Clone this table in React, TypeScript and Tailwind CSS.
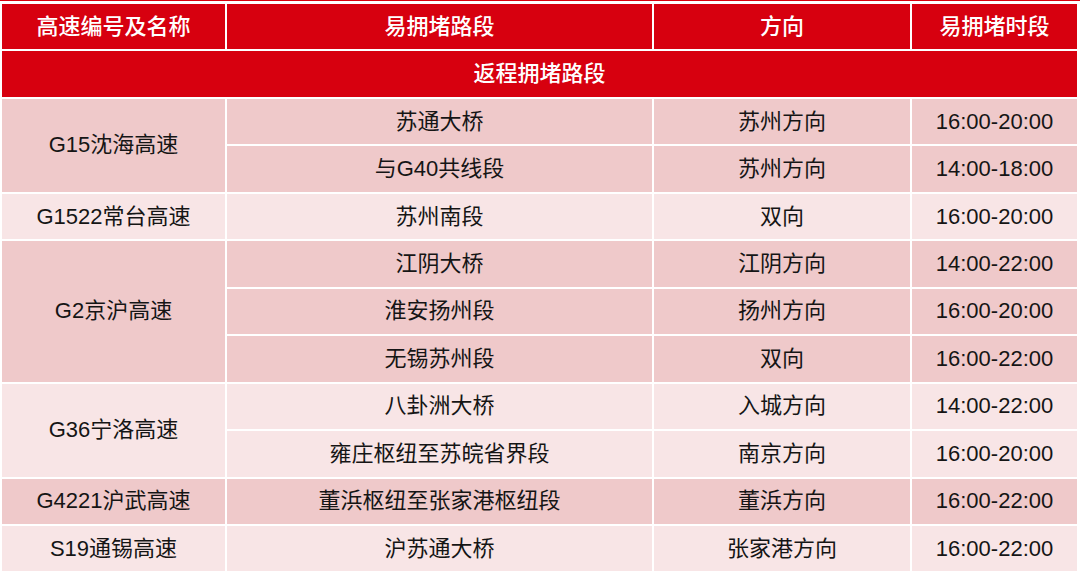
import React from "react";

const dark = "bg-[#efc9ca]";
const light = "bg-[#f8e5e6]";

type Row = { road: string; dir: string; time: string };
type Group = { name: string; rows: Row[]; tone: string };

const groups: Group[] = [
  {
    name: "G15沈海高速",
    tone: dark,
    rows: [
      { road: "苏通大桥", dir: "苏州方向", time: "16:00-20:00" },
      { road: "与G40共线段", dir: "苏州方向", time: "14:00-18:00" },
    ],
  },
  {
    name: "G1522常台高速",
    tone: light,
    rows: [{ road: "苏州南段", dir: "双向", time: "16:00-20:00" }],
  },
  {
    name: "G2京沪高速",
    tone: dark,
    rows: [
      { road: "江阴大桥", dir: "江阴方向", time: "14:00-22:00" },
      { road: "淮安扬州段", dir: "扬州方向", time: "16:00-20:00" },
      { road: "无锡苏州段", dir: "双向", time: "16:00-22:00" },
    ],
  },
  {
    name: "G36宁洛高速",
    tone: light,
    rows: [
      { road: "八卦洲大桥", dir: "入城方向", time: "14:00-22:00" },
      { road: "雍庄枢纽至苏皖省界段", dir: "南京方向", time: "16:00-20:00" },
    ],
  },
  {
    name: "G4221沪武高速",
    tone: dark,
    rows: [{ road: "董浜枢纽至张家港枢纽段", dir: "董浜方向", time: "16:00-22:00" }],
  },
  {
    name: "S19通锡高速",
    tone: light,
    rows: [{ road: "沪苏通大桥", dir: "张家港方向", time: "16:00-22:00" }],
  },
];

export default function App() {
  const cells: React.ReactNode[] = [];
  let rowIdx = 3;
  groups.forEach((g, gi) => {
    const span = g.rows.length;
    cells.push(
      <div
        key={`g${gi}`}
        className={`${g.tone} flex items-center justify-center`}
        style={{ gridColumn: "1", gridRow: `${rowIdx} / span ${span}` }}
      >
        {g.name}
      </div>
    );
    g.rows.forEach((r, ri) => {
      const row = rowIdx + ri;
      cells.push(
        <div key={`r${gi}-${ri}-a`} className={`${g.tone} flex items-center justify-center`} style={{ gridColumn: "2", gridRow: `${row}` }}>
          {r.road}
        </div>,
        <div key={`r${gi}-${ri}-b`} className={`${g.tone} flex items-center justify-center`} style={{ gridColumn: "3", gridRow: `${row}` }}>
          {r.dir}
        </div>,
        <div key={`r${gi}-${ri}-c`} className={`${g.tone} flex items-center justify-center`} style={{ gridColumn: "4", gridRow: `${row}` }}>
          {r.time}
        </div>
      );
    });
    rowIdx += span;
  });

  return (
    <div
      className="w-[1080px] h-[573px] overflow-hidden bg-white border-t border-[#d7000f] pt-[3px] pl-[2px] pr-[3px] text-[22px] text-[#151515] leading-none"
      style={{ fontFamily: '"Liberation Sans", "Noto Sans CJK SC", sans-serif' }}
    >
      <div className="grid grid-cols-[223px_425px_256px_165px] grid-rows-[45px_46px_repeat(10,45.45px)] gap-[2px]">
        <div className="bg-[#d7000f] text-white font-medium flex items-center justify-center">高速编号及名称</div>
        <div className="bg-[#d7000f] text-white font-medium flex items-center justify-center">易拥堵路段</div>
        <div className="bg-[#d7000f] text-white font-medium flex items-center justify-center">方向</div>
        <div className="bg-[#d7000f] text-white font-medium flex items-center justify-center">易拥堵时段</div>
        <div className="col-span-4 bg-[#d7000f] text-white font-medium flex items-center justify-center">返程拥堵路段</div>
        {cells}
      </div>
    </div>
  );
}
